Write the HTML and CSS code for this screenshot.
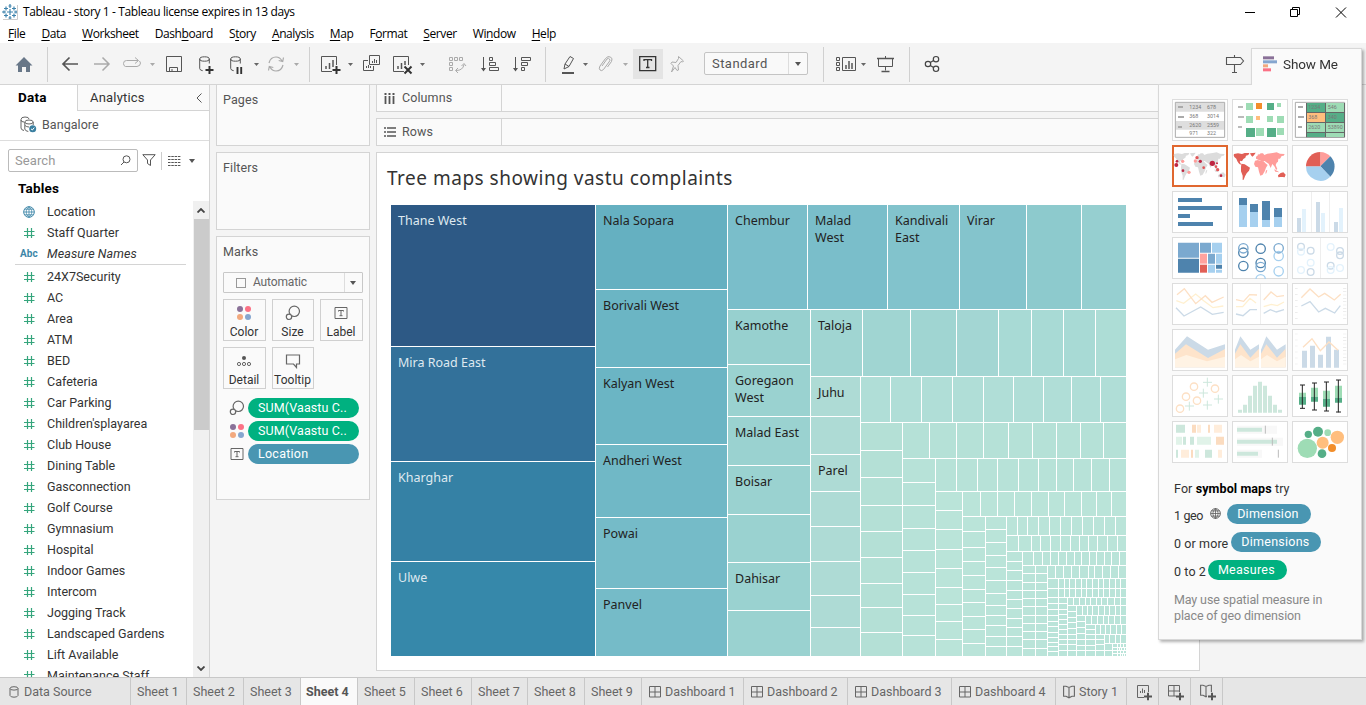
FILE: index.html
```html
<!DOCTYPE html>
<html lang="en">
<head>
<meta charset="utf-8">
<title>Tableau - story 1</title>
<link rel="stylesheet" href="styles.css">
</head>
<body>
<svg class="defs" width="0" height="0">
  <symbol id="hash" viewBox="0 0 12 12"><path d="M4.5 1v10M8.5 1v10M1 4.5h10.500M1 8.500h10.500" fill="none" stroke="#35a57c" stroke-width="1.2"/></symbol>
  <symbol id="globe" viewBox="0 0 12 12"><path d="M6 .7v10.600M.7 6h10.600M1.500 3.200h9M1.500 8.800h9M6 .7C2.300 3.500 2.300 8.500 6 11.300C9.700 8.500 9.700 3.500 6 .7" fill="none" stroke="currentColor" stroke-width=".8"/><circle cx="6" cy="6" r="5.300" fill="none" stroke="currentColor"/></symbol>
  <symbol id="size" viewBox="0 0 16 16"><circle cx="9.300" cy="6.300" r="5.200" fill="none" stroke="#666" stroke-width="1.2"/><circle cx="4" cy="11.800" r="2.700" fill="#fafafa" stroke="#666" stroke-width="1.2"/></symbol>
  <symbol id="dots" viewBox="0 0 16 16"><circle cx="4" cy="4" r="3" fill="#8a7198"/><circle cx="12" cy="4" r="3" fill="#fb7185"/><circle cx="4" cy="12" r="3" fill="#f2a97e"/><circle cx="12" cy="12" r="3" fill="#85a6cf"/></symbol>
  <symbol id="tbox" viewBox="0 0 14 14"><path d="M1 1.500h12v11H1zM4.500 5.500v-1h5v1M7 4.500v5M5.500 9.700h3" fill="none" stroke="#666"/></symbol>
  <symbol id="dash" viewBox="0 0 12 12"><path d="M.5.5h11v10.500H.5zM6 .5v10.500M.5 6h11" fill="none" stroke="#666"/></symbol>
  <symbol id="book" viewBox="0 0 12 14"><path d="M.6 1.300L3 1.200l3 1.200 3-1.200 2.400.1v9.900H9L6 12.800 3 11.200H.6zM6 2.400v10" fill="none" stroke="#666" stroke-width="1.100"/></symbol>
  <symbol id="plus" viewBox="0 0 8 8"><path d="M4 0v8M0 4h8" stroke="#555" stroke-width="2"/></symbol>
  <symbol id="world" viewBox="225 455 162 90">
    <g class="west"><path d="M228 462l12-2 12 2 8-3 14 0-3 6-7 2-2 6-6 4-4 7-4-2-3 3 4 7-2 2-5-4-4-6-3-8-6-5-2-5zM276 460l17-2-5 8-5 4-4-4zM250 491l10 2 7 4 9 6-3 9-7 8-5 9-4 10-3 1 0-13-5-13 0-12z"/></g>
    <g class="east"><path d="M291 482l9-2 6 3 10 0 8 8 5 4-5 8-4 11-6 10-7 3-4-12-3-13-8-2-4-8zM294 476l0-6 7-4 7-6 7 0 4 5 9-4 16-2 12-2 10 4 14 1-3 5-6 1-5 8-5 0-1 9-4 3-3 7 5 12-4 3-4-10-7-8-5 12-6-13-7-4-5-4-9 1-7-3zM348 508l9 4 7 5-12-2zM324 511l4 0-3 9-3 1zM299 464l3-3 0 6-4 3z"/></g>
    <path class="aus" d="M360 526l8-7 8-2 7 7-3 8-7-1-6 0-6 1z"/>
  </symbol>
</svg>

<header class="titlebar">
  <svg width="16" height="16" viewBox="0 0 16 16"><path d="M8 5v6M5 8h6M8 0v4M6.500 2h3M8 12v4M6.500 14h3M0 8h4M2 6.500v3M12 8h4M14 6.500v3M4 2.500v4M2 4.500h4M12 2.500v4M10 4.500h4M4 9.500v4M2 11.500h4M12 9.500v4M10 11.500h4" stroke="#3f84ad" stroke-width="1.200" fill="none"/><path d="M1 15.500h14.500V1" fill="none" stroke="#ccc"/></svg>
  <span class="apptitle">Tableau - story 1 - Tableau license expires in 13 days</span>
  <svg class="winbtns" width="110" height="20" viewBox="1240 0 110 20"><path d="M1245 10.500h10M1290.500 7.500h7v7h-7zM1292.500 7v-1.500h7v7h-1.500M1336 5.500l10 10M1346 5.500l-10 10" fill="none" stroke="#000"/></svg>
</header>
<nav class="menubar">
  <span><u>F</u>ile</span><span><u>D</u>ata</span><span><u>W</u>orksheet</span><span>Dash<u>b</u>oard</span><span>S<u>t</u>ory</span><span><u>A</u>nalysis</span><span><u>M</u>ap</span><span>F<u>o</u>rmat</span><span><u>S</u>erver</span><span>Wi<u>n</u>dow</span><span><u>H</u>elp</span>
</nav>

<div class="toolbar">
  <svg width="47" height="41" viewBox="0 43 47 41"><path d="M15.500 65.500L24 57l8.500 8.500H30V72h-4v-5h-4v5h-4v-6.500z" fill="#687788"/></svg>
  <i class="sep"></i>
  <svg width="261" height="41" viewBox="48 43 261 41" fill="none" stroke="#555">
    <path d="M63 64h15M69.500 57.500L63 64l6.500 6.500" stroke-width="1.700"/>
    <path d="M94 64h15M102.500 57.500L109 64l-6.500 6.500" stroke="#aaa" stroke-width="1.500"/>
    <path d="M129 66.500h-3.500q-2-.5-2-3 0-3 3-3H138M135 57.500l3.500 3-3.500 3M129 66.500h8q3.500-.5 3.500-3.500l-1-2" stroke="#aaa"/>
    <path d="M150 63h5l-2.500 3zM294 63h5l-2.500 3z" fill="#aaa" stroke="none"/><path d="M254 63h5l-2.500 3z" fill="#666" stroke="none"/>
    <path d="M166.500 56.500h15v15h-15zM169.500 71v-3.500h8V71M172 71v-2" />
    <ellipse cx="204.500" cy="59" rx="4.800" ry="2.200"/><path d="M199.700 59v9.500q.3 2 3 2.200M209.300 59v4.500"/>
    <path d="M209.500 66v8M205.500 70h8" stroke="#333" stroke-width="2"/>
    <ellipse cx="235.500" cy="59" rx="4.800" ry="2.200"/><path d="M230.700 59v9.500q.3 2 3 2.200M240.300 59v4.500"/>
    <path d="M237.500 67v7M241.200 67v7" stroke="#333" stroke-width="1.900"/>
    <path d="M269 63q1.500-6 7-6 4 0 6 4M283 65q-1.500 6-7 6-4 0-6-4M283.500 57.500l-.8 4-4-1M268.500 70.500l.8-4 4 1" stroke="#aaa" stroke-width="1.200"/>
  </svg>
  <i class="sep"></i>
  <svg width="235" height="41" viewBox="310 43 235 41" fill="none" stroke="#555">
    <path d="M332 71.500h-10.500v-15h15V65" /><path d="M326 69v-3M329.500 69v-6M333 67v-7" stroke-width="1.500"/><path d="M336.500 66v8M332.500 70h8" stroke="#333" stroke-width="2"/>
    <path d="M348 63h5l-2.500 3zM420 63h5l-2.500 3z" fill="#666" stroke="none"/>
    <path d="M369.500 55.500h10v9h-10zM368 60.500h-4.500v10h10v-4.500M372.500 63v-2M374.500 63v-4M376.500 63v-3M366.500 68v-2M368.500 68v-3M370.500 68v-2"/>
    <path d="M404 71.500h-10.500v-15h15V65"/><path d="M398 69v-3M401.500 69v-6M405 65v-4" stroke-width="1.500"/><path d="M404.500 66.500l7 7M411.500 66.500l-7 7" stroke="#333" stroke-width="2"/>
    <g stroke="#aaa"><path d="M449.500 57.500h3v3h-3zM454.500 57.500h3v3h-3zM459.500 57.500h3v3h-3zM449.500 62.500h3v3h-3zM449.500 67.500h3v3h-3zM456 70.500q7 0 8-6M461.500 66l2.500-2.500 2 2.500M458 68l-2.500 2.500 2.500 2.500"/></g>
    <path d="M483.500 57v13M489.500 57.500h3v3h-3zM489.500 62.500h6v3h-6zM489.500 67.500h9v3h-9z"/><path d="M481 68h5l-2.500 3.500zM513 68h5l-2.500 3.500z" fill="#555" stroke="none"/>
    <path d="M515.500 57v13M521.500 57.500h9v3h-9zM521.500 62.500h6v3h-6zM521.500 67.500h3v3h-3z"/>
  </svg>
  <i class="sep"></i>
  <svg width="87" height="41" viewBox="546 43 87 41" fill="none" stroke="#555">
    <path d="M564 69l1-5 5-7.500 3.500 2-4.500 8zM565 64l4 2.500"/><path d="M562 73h12" stroke-width="2"/>
    <path d="M583 63h5l-2.500 3z" fill="#666" stroke="none"/><path d="M623 63h5l-2.500 3z" fill="#aaa" stroke="none"/>
    <path d="M602 66l5-7q1.500-1.500 2.500 0t-.5 3l-5.500 7.500q-2 2-3.500.5t0-4l5.500-7.500q2.500-3 5-1.500t1 4.500l-4 5.500" stroke="#aaa"/>
  </svg>
  <div class="tb-on"><svg width="18" height="16" viewBox="0 0 18 16"><path d="M.7.7h16v14H.7zM5 5V3.700h7.500V5M8.700 3.700v8M7 11.500h3.500" fill="none" stroke="#333" stroke-width="1.300"/></svg></div>
  <svg width="41" height="41" viewBox="663 43 41 41"><path d="M678.500 56.500l5 4.500-1 1-1.500-.5-3 4 .5 4.500-1.500.5-2-3-3.500 4.500 2-6-2.500-2.500 1-1.500 4 .5 2.500-4z" fill="none" stroke="#aaa"/></svg>
  <div class="select"><span>Standard</span><i></i></div>
  <i class="sep sep2"></i>
  <svg width="85" height="41" viewBox="824 43 85 41" fill="none" stroke="#555">
    <path d="M836.500 57.500h3v3h-3zM836.500 62.500h3v3h-3zM836.500 67.500h3v3h-3zM842.500 57.500h13v13h-13z"/><path d="M846 69v-4M849 69v-8M852 69v-6" stroke-width="1.500"/><path d="M861 63h5l-2.500 3z" fill="#666" stroke="none"/>
    <path d="M878.500 58.500h14v8h-14zM885.500 66.500v4M885.500 56v2"/><path d="M877 58.500h17M881.500 71.500h8" stroke-width="1.500"/>
  </svg>
  <i class="sep"></i>
  <svg width="40" height="41" viewBox="910 43 40 41" fill="none" stroke="#444" stroke-width="1.200"><circle cx="928" cy="64" r="2.700"/><circle cx="936" cy="59.200" r="2.700"/><circle cx="936" cy="68.800" r="2.700"/><path d="M930.300 62.600l3.300-2M930.300 65.400l3.300 2"/></svg>
  <svg class="guide" width="20" height="20" viewBox="1225 54 20 20" fill="none" stroke="#555"><path d="M1226.500 57.500h14l3 3.500-3 3.500h-14zM1234.500 55v2.500M1234.500 64.500v7.500M1232 72.500h5" stroke-width="1.100"/></svg>
</div>

<main class="work">
  <aside class="data">
    <div class="dtabs"><b>Data</b><div><span>Analytics</span><svg width="6" height="10" viewBox="0 0 6 10"><path d="M5.500.5L1 5l4.500 4.500" fill="none" stroke="#555"/></svg></div></div>
    <div class="source"><svg width="18" height="18" viewBox="0 0 18 18" fill="none" stroke="#666"><path d="M1 12V3.500Q1 1 5 1t4 2M1 4q0 2 3 2M1 12q0 2 3 2.500"/><ellipse cx="9" cy="6" rx="4.200" ry="2"/><path d="M4.800 6v7q.3 2 3.500 2.500M13.200 6v3M5 9.500q1.500 1.500 4 1.500"/><circle cx="12.700" cy="12.700" r="3.500" fill="#3a7fa0" stroke="none"/><path d="M11 12.800l1.300 1.200 2-2.400" stroke="#fff"/></svg><span>Bangalore</span></div>
    <div class="find"><div class="search"><span>Search</span><svg width="11" height="11" viewBox="0 0 11 11"><path d="M1 10l3-3" stroke="#555"/><circle cx="6.500" cy="4.300" r="3.500" fill="none" stroke="#555"/></svg></div>
      <svg width="14" height="13" viewBox="0 0 14 13"><path d="M.8.700h12.400L8.500 6v5.500l-3-2V6z" fill="none" stroke="#555"/></svg><i class="bar"></i>
      <svg width="13" height="10" viewBox="0 0 13 10"><path d="M0 .5h13M0 3.500h13M0 6.500h13M0 9.500h13" stroke="#555" stroke-dasharray="2.500 .8"/></svg><i class="caret"></i></div>
    <h2>Tables</h2>
    <div class="fieldwrap"><ul class="fields" id="fields"></ul>
      <div class="scroll"><svg width="8" height="5" viewBox="0 0 8 5"><path d="M.5 4.500L4 1l3.500 3.500" fill="none" stroke="#444" stroke-width="1.800"/></svg><div class="thumb"></div><svg width="8" height="5" viewBox="0 0 8 5"><path d="M.5.500L4 4 7.500.500" fill="none" stroke="#444" stroke-width="1.800"/></svg></div></div>
  </aside>

  <section class="cards">
    <div class="card pages">Pages</div>
    <div class="card filters">Filters</div>
    <div class="card marks"><span>Marks</span>
      <div class="mselect"><i class="sq"></i><span>Automatic</span><b></b></div>
      <div class="mgrid">
        <div><svg width="16" height="16"><use href="#dots"/></svg>Color</div>
        <div><svg width="16" height="16"><use href="#size"/></svg>Size</div>
        <div><svg width="14" height="16"><use href="#tbox"/></svg>Label</div>
        <div><svg width="16" height="16" viewBox="0 0 16 16"><circle cx="8" cy="5" r="2" fill="#555"/><g fill="none" stroke="#666"><circle cx="3" cy="11" r="1.600"/><circle cx="8" cy="11" r="1.600"/><circle cx="13" cy="11" r="1.600"/></g></svg>Detail</div>
        <div><svg width="16" height="16" viewBox="0 0 16 16"><path d="M1.500 2h13v9h-3v3.500L8.500 11h-7z" fill="none" stroke="#666" stroke-width="1.200"/></svg>Tooltip</div>
      </div>
      <div class="mpill"><svg width="16" height="16"><use href="#size"/></svg><span class="pill green">SUM(Vaastu C..</span></div>
      <div class="mpill"><svg width="16" height="16"><use href="#dots"/></svg><span class="pill green">SUM(Vaastu C..</span></div>
      <div class="mpill"><svg width="16" height="14"><use href="#tbox"/></svg><span class="pill blue loc">Location</span></div>
    </div>
  </section>

  <section class="view">
    <div class="shelf"><div><svg width="11" height="11" viewBox="0 0 11 11"><path d="M1.500 3v8M5.500 3v8M9.500 3v8M.5 1h2M4.500 1h2M8.500 1h2" stroke="#555" stroke-width="1.800"/></svg>Columns</div></div>
    <div class="shelf"><div><svg width="12" height="10" viewBox="0 0 12 10"><path d="M3 1h9M3 5h9M3 9h9M0 1h2M0 5h2M0 9h2" stroke="#555" stroke-width="1.600"/></svg>Rows</div></div>
    <div class="sheet"><h1>Tree maps showing vastu complaints</h1><svg id="tree" width="735" height="451" viewBox="391 205 735 451" shape-rendering="crispEdges"></svg></div>
  </section>
</main>

<footer class="tabs">
  <div class="t-src"><svg width="10" height="12" viewBox="0 0 10 12"><path d="M1 2.500v7q.5 1.700 4 1.700t4-1.700v-7" fill="none" stroke="#666"/><ellipse cx="5" cy="2.400" rx="4" ry="1.700" fill="none" stroke="#666"/></svg>Data Source</div>
  <div class="t-s first">Sheet 1</div><div class="t-s">Sheet 2</div><div class="t-s">Sheet 3</div><div class="t-s on">Sheet 4</div><div class="t-s">Sheet 5</div><div class="t-s">Sheet 6</div><div class="t-s six">Sheet 7</div><div class="t-s">Sheet 8</div><div class="t-s">Sheet 9</div>
  <div class="t-d one"><svg width="12" height="12"><use href="#dash"/></svg>Dashboard 1</div><div class="t-d"><svg width="12" height="12"><use href="#dash"/></svg>Dashboard 2</div><div class="t-d"><svg width="12" height="12"><use href="#dash"/></svg>Dashboard 3</div><div class="t-d"><svg width="12" height="12"><use href="#dash"/></svg>Dashboard 4</div>
  <div class="t-st"><svg width="12" height="14"><use href="#book"/></svg>Story 1</div>
  <div class="t-n"><svg width="16" height="17"><path d="M8 13.500H1.500v-12h11V8M4.500 9V7M6.500 9V4.500M8.500 9V6" fill="none" stroke="#666"/><use href="#plus" x="8" y="8.500" width="8" height="8"/></svg></div>
  <div class="t-n"><svg width="16" height="17"><use href="#dash" y="1" width="12" height="12"/><path d="M8 8h8v8H8z" fill="#e6e6e6"/><use href="#plus" x="8" y="8.500" width="8" height="8"/></svg></div>
  <div class="t-n"><svg width="16" height="17"><use href="#book" width="12" height="14"/><path d="M7 8h9v8H7z" fill="#e6e6e6"/><use href="#plus" x="8" y="8.500" width="8" height="8"/></svg></div>
</footer>

<aside class="showme">
  <div class="sm-tab"><svg width="14" height="16" viewBox="315 168 42 46"><path d="M315 168h33v9h-33z" fill="#8a7198"/><path d="M315 180h42v9h-42z" fill="#85a6cf"/><path d="M315 192h15v9h-15z" fill="#f2a97e"/><path d="M315 204h24v9h-24z" fill="#fb7185"/></svg>Show Me</div>
  <div class="sm-body">
    <div class="thumbs">
      <svg viewBox="42 297 168 126"><path d="M52 307h148v105H52z" fill="#fff" stroke="#aaa" stroke-width="3"/><path d="M54 309h144v26H54zM54 363h144v26H54z" fill="#dedede"/><path d="M60 318h15v6H60zM60 348h18v6H60zM60 378h12v6H60z" fill="#aaa"/><g class="tiny"><text x="94" y="327">1234</text><text x="147" y="327">678</text><text x="94" y="354">368</text><text x="147" y="354">3014</text><text x="94" y="381">2620</text><text x="147" y="381">2559</text><text x="94" y="405">971</text><text x="147" y="405">322</text></g></svg>
      <svg viewBox="222 297 168 126"><path d="M240 318h15v6h-15zM240 348h18v6h-18zM240 378h12v6h-12z" fill="#bbb"/><path d="M264 309h21v21h-21zM357 309h12v12h-12zM264 348h21v21h-21zM327 348h18v18h-18zM357 348h21v21h-21zM294 384h24v24h-24zM357 384h21v21h-21z" fill="#9edcb5"/><path d="M327 309h21v21h-21zM264 384h27v27h-27zM327 384h27v27h-27z" fill="#55ae87"/><path d="M294 309h18v18h-18z" fill="#f28e2b"/><path d="M294 348h12v12h-12z" fill="#ffbe7d"/></svg>
      <svg viewBox="402 297 168 126"><path d="M412 307h148v105H412z" fill="#fff" stroke="#aaa" stroke-width="3"/><path d="M420 318h15v6h-15zM420 348h18v6h-18zM420 378h12v6h-12z" fill="#aaa"/><path d="M444 309h117v103H444z" fill="#666"/><path d="M447 309h54v27h-54zM504 339h54v27h-54zM447 399h54v12h-54z" fill="#55ae87"/><path d="M504 309h54v27h-54zM447 369h54v27h-54zM504 369h54v27h-54zM504 399h54v12h-54z" fill="#9edcb5"/><path d="M447 339h54v27h-54z" fill="#ffbe7d"/><g class="tiny"><text x="451" y="327">1234</text><text x="509" y="327">546</text><text x="451" y="357">368</text><text x="509" y="357">340</text><text x="451" y="387">2620</text><text x="509" y="387">53890</text></g></svg>

      <svg class="sel" viewBox="42 435 168 126"><use class="wgray" href="#world" x="45" y="455" width="162" height="90"/><g fill="#bf2642"><circle cx="55" cy="495" r="6"/><circle cx="57" cy="484" r="4"/><circle cx="127" cy="484" r="5"/><circle cx="163" cy="490" r="8"/><circle cx="75" cy="512" r="4"/><circle cx="189" cy="527" r="4"/><circle cx="177" cy="490" r="3"/></g><g fill="#e15759"><circle cx="117" cy="473" r="5"/><circle cx="74" cy="484" r="5" fill="#ff9d9a"/><circle cx="93" cy="517" r="5" fill="#ff9d9a"/><circle cx="112" cy="483" r="5" fill="#ff9d9a"/><circle cx="137" cy="503" r="4"/><circle cx="179" cy="509" r="5"/><circle cx="174" cy="500" r="4"/></g></svg>
      <svg viewBox="222 435 168 126"><use class="wred" href="#world" x="225" y="455" width="162" height="90"/></svg>
      <svg viewBox="402 435 168 126"><path d="M487 499V456a43 43 0 0 1 30 13z" fill="#ff9d9a"/><path d="M487 499l30-30a43 43 0 0 1 0 61z" fill="#4e83ad"/><path d="M487 499l30 31a43 43 0 0 1-73-31z" fill="#a6d0ef"/><path d="M487 499h-43a43 43 0 0 1 43-43z" fill="#e15f56"/></svg>

      <svg viewBox="42 573 168 126"><path d="M60 594h72v12H60zM60 618h132v12H60zM60 642h36v12H60zM60 666h105v12H60z" fill="#4e83ad"/></svg>
      <svg viewBox="222 573 168 126"><path d="M243 594h24v87h-24zM276 612h24v69h-24zM312 603h24v78h-24zM348 624h24v57h-24z" fill="#4e83ad"/><path d="M243 615h24v66h-24zM276 636h24v45h-24zM312 660h24v21h-24zM348 651h24v30h-24z" fill="#a6d0ef"/></svg>
      <svg viewBox="402 573 168 126"><path d="M459 576h3v120h-3zM513 576h3v120h-3z" fill="#eee"/><path d="M417 654h12v42h-12zM474 606h12v90h-12zM528 666h12v30h-12z" fill="#cbdae7"/><path d="M432 627h12v69h-12zM489 639h12v57h-12zM543 624h12v72h-12z" fill="#e3f2fc"/></svg>

      <svg viewBox="42 22 168 126"><path d="M60 39h63v45H60zM126 39h33v30h-33zM150 72h21v30h-21z" fill="#7ba9cf"/><path d="M60 87h63v42H60zM174 105h18v12h-18z" fill="#4e83ad"/><path d="M162 39h30v30h-30zM174 72h18v30h-18zM150 105h21v24h-21zM174 120h18v9h-18z" fill="#a6d0ef"/><path d="M126 72h21v30h-21z" fill="#ffa39f"/><path d="M126 105h21v24h-21z" fill="#e15f56"/></svg>
      <svg viewBox="222 22 168 126"><g fill="none" stroke="#4e83ad" stroke-width="4"><circle cx="256" cy="69" r="14"/><circle cx="256" cy="109" r="14"/><circle cx="308" cy="57" r="14"/><circle cx="308" cy="100" r="14"/><circle cx="256" cy="56" r="14" stroke="#7ba9cf"/><circle cx="362" cy="56" r="14" stroke="#7ba9cf"/><circle cx="308" cy="112" r="14" stroke="#7ba9cf"/><g stroke="#a6d0ef"><circle cx="362" cy="79" r="14"/><circle cx="362" cy="125" r="14"/><circle cx="308" cy="149" r="14"/></g></g></svg>
      <svg viewBox="402 22 168 126"><path d="M486 25h3v120h-3z" fill="#eee"/><g fill="none" stroke="#cbdae7" stroke-width="4"><circle cx="429" cy="51" r="10"/><circle cx="458" cy="63" r="10"/><circle cx="458" cy="127" r="10"/><circle cx="546" cy="64" r="10"/><circle cx="546" cy="77" r="10"/><circle cx="518" cy="108" r="10"/><g stroke="#e3f2fc"><circle cx="429" cy="66" r="10"/><circle cx="458" cy="99" r="10"/><circle cx="429" cy="121" r="10"/><circle cx="518" cy="52" r="10"/><circle cx="518" cy="121" r="10"/><circle cx="546" cy="115" r="10"/></g></g></svg>

      <svg viewBox="42 160 168 126" fill="none" stroke-width="4"><path d="M55 213l22 8 36-28 24 20 28 21 31-5" stroke="#fff0d0"/><path d="M57 195l22-18 34 45 29-24 20 20 35-16" stroke="#fde0c4"/><path d="M54 234l24 25 50-27 35 22 34-6" stroke="#cbdae7"/></svg>
      <svg viewBox="222 160 168 126" fill="none" stroke-width="4"><path d="M306 163h3v120h-3z" fill="#eee" stroke="none"/><path d="M234 231h20l22-25 18 14M317 231l23-7 18 4 20-11" stroke="#fff0d0"/><path d="M234 210l23 5 18-20 22 1M317 211l22-24 18 14 21-3" stroke="#fde0c4"/><path d="M234 253l21 5 21-18h21M317 251l20-11 18 7 23-7" stroke="#cbdae7"/></svg>
      <svg viewBox="402 160 168 126" fill="none" stroke-width="4"><path d="M415 175v100" stroke="#e8e8e8" stroke-width="8" stroke-dasharray="2 16"/><path d="M560 175v100" stroke="#e8e8e8" stroke-width="10" stroke-dasharray="2 8"/><path d="M430 204l26-26 26 24 18-11 29 20 19-17" stroke="#fde0c4"/><path d="M430 229l26-13 26 31 20-11 28 14 17-22" stroke="#cbdae7"/></svg>

      <svg viewBox="42 298 168 126"><path d="M51 360l36-40 63 40 51-16v69H51z" fill="#cbdae7"/><path d="M51 372l33-28 66 41 51-27v55H51z" fill="#fee4cb"/><path d="M51 389l34-13 62 19 54-14v32H51z" fill="#fff3e4"/></svg>
      <svg viewBox="222 298 168 126"><path d="M231 360l16-40 30 40 26-16v69h-72zM309 360l16-40 32 40 26-16v69h-74z" fill="#cbdae7"/><path d="M231 372l16-28 30 40 26-27v56h-72zM309 372l16-28 32 40 26-27v56h-74z" fill="#fee4cb"/><path d="M231 389l18-13 28 19 26-14v32h-72zM309 389l18-13 30 19 26-14v32h-74z" fill="#fff3e4"/></svg>
      <svg viewBox="402 298 168 126"><path d="M415 312v100" stroke="#e8e8e8" stroke-width="8" stroke-dasharray="2 16"/><path d="M560 312v100" stroke="#e8e8e8" stroke-width="10" stroke-dasharray="2 8"/><path d="M432 363h15v51h-15zM456 348h15v66h-15zM480 375h15v39h-15zM504 321h15v93h-15zM528 360h15v54h-15z" fill="#cbdae7"/><path d="M435 353l27-26 25 36 26-26 27 25" fill="none" stroke="#fde0c4" stroke-width="4"/></svg>

      <svg viewBox="42 436 168 126" fill="none"><g stroke="#fde0c4" stroke-width="4"><circle cx="108" cy="471" r="11"/><circle cx="171" cy="477" r="11"/><circle cx="84" cy="501" r="11"/><circle cx="117" cy="513" r="11"/><circle cx="66" cy="537" r="11"/></g><path d="M148 444v27M135 458h27M136 477v27M123 490h27M181 495v27M168 508h27M94 516v27M81 529h27M148 513v27M135 526h27" stroke="#cde7dc" stroke-width="3"/></svg>
      <svg viewBox="222 436 168 126"><path d="M240 540h12v9h-12zM255 525h12v24h-12zM270 498h12v51h-12zM285 468h12v81h-12zM300 456h12v93h-12zM315 468h12v81h-12zM330 498h12v51h-12zM345 525h12v24h-12zM360 540h12v9h-12z" fill="#cde7dc"/></svg>
      <svg viewBox="402 436 168 126"><path d="M423 489h21v12h-21zM459 474h21v27h-21zM495 483h21v24h-21zM531 468h21v36h-21z" fill="#9edcb5"/><path d="M423 501h21v24h-21zM459 501h21v15h-21zM495 507h21v24h-21zM531 504h21v15h-21z" fill="#55ae87"/><path d="M433 466v70M426 466h15M426 536h15M469 460v81M462 460h15M462 541h15M505 457v87M498 457h15M498 544h15M541 451v97M534 451h15M534 547h15" stroke="#222" stroke-width="3"/></svg>

      <svg viewBox="42 574 168 126"><path d="M54 585h27v24H54zM96 621h12v24H96zM75 621h9v24h-9zM54 660h6v24h-6zM141 660h21v24h-21z" fill="#cde7dc"/><path d="M54 621h18v24H54zM117 621h42v24h-42zM111 660h12v24h-12z" fill="#e1f3e9"/><path d="M102 585h12v24h-12zM150 585h6v24h-6zM174 621h24v24h-24zM99 660h6v24h-6z" fill="#fbdcc0"/><path d="M117 585h12v24h-12zM168 585h24v24h-24zM69 660h24v24H69zM180 660h12v24h-12z" fill="#ffeddb"/></svg>
      <svg viewBox="222 574 168 126"><path d="M237 588h120v24H237zM237 624h138v24H237zM237 660h75v24h-75z" fill="#f8f8f8"/><path d="M237 594h75v12h-75zM237 630h120v12H237zM237 666h63v12h-63z" fill="#cde7dc"/><path d="M322 588v24M343 624v24M361 660v24" stroke="#bbb" stroke-width="3"/></svg>
      <svg viewBox="402 574 168 126"><g fill="#55ae87"><circle cx="451" cy="614" r="11"/><circle cx="480" cy="606" r="15"/><circle cx="492" cy="672" r="13"/></g><g fill="#9edcb5"><circle cx="509" cy="609" r="10"/><circle cx="448" cy="656" r="29"/></g><g fill="#ffbe7d"><circle cx="494" cy="639" r="18"/><circle cx="538" cy="623" r="20"/></g><circle cx="522" cy="655" r="12" fill="#f28e2b"/></svg>
    </div>
    <p class="r0">For <b>symbol maps</b> try</p>
    <p class="r1"><span>1 geo</span><svg width="11" height="11"><use href="#globe"/></svg><span class="pill blue">Dimension</span></p>
    <p class="r2"><span>0 or more</span><span class="pill blue">Dimensions</span></p>
    <p class="r3"><span>0 to 2</span><span class="pill green">Measures</span></p>
    <p class="note">May use spatial measure in<br>place of geo dimension</p>
  </div>
</aside>
<script src="app.js"></script>
</body>
</html>
```

FILE: styles.css
```css
* { box-sizing: border-box; }
body { margin: 0; width: 1366px; height: 705px; overflow: hidden; position: relative; display: flex; flex-direction: column; background: #f4f4f4; font: 13px/16px Roboto, "Noto Sans", sans-serif; color: #333; }
svg { display: block; flex: none; }
.defs { position: absolute; }
h1, h2, p, ul { margin: 0; padding: 0; font-weight: 400; list-style: none; }

.titlebar { height: 22px; flex: none; background: #fff; display: flex; align-items: center; padding: 1px 16px 0 2px; color: #000; font: 12px/16px "Open Sans", "Noto Sans", sans-serif; }
.apptitle { margin-left: 5px; letter-spacing: -.37px; }
.winbtns { margin-left: auto; }
.menubar { height: 21px; flex: none; background: #fff; display: flex; padding: 4px 0 0 8px; gap: 16px; color: #000; font: 12px/16px "Open Sans", "Noto Sans", sans-serif; letter-spacing: -.41px; }
.menubar u { text-underline-offset: 2px; }

.toolbar { height: 42px; flex: none; display: flex; border-bottom: 1px solid #d4d4d4; background: #f4f4f4; }
.sep { width: 1px; height: 35px; margin-top: 4px; background: #d0d0d0; }
.sep2 { margin-left: 15px; }
.tb-on { width: 30px; height: 30px; margin-top: 6px; background: #e4e4e4; display: flex; align-items: center; justify-content: center; }
.select { width: 104px; height: 23px; margin-top: 9px; background: #f9f9f9; border: 1px solid #c4c4c4; border-radius: 2px; display: flex; color: #555; }
.select span { flex: 1; padding-left: 7px; font-size: 13px; line-height: 21px; letter-spacing: .45px; }
.select i { width: 19px; border-left: 1px solid #ddd; }
.select i::after, .mselect b::after, .caret { content: ""; display: block; width: 0; height: 0; border: 3.5px solid transparent; border-top: 4px solid #555; border-bottom: 0; }
.select i::after { margin: 9px 0 0 6px; }
.guide { margin: 11px 0 0 275px; }

.work { flex: 1; min-height: 0; display: flex; }
.data { width: 210px; background: #fff; border-right: 1px solid #d4d4d4; display: flex; flex-direction: column; }
.dtabs { height: 26px; flex: none; display: flex; font-size: 14px; line-height: 24px; }
.dtabs b { width: 77px; padding-left: 18px; color: #000; font-weight: 700; font-size: 13.500px; letter-spacing: .2px; }
.dtabs div { flex: 1; border-left: 1px solid #d4d4d4; border-bottom: 1px solid #d4d4d4; background: #fafafa; display: flex; align-items: center; justify-content: space-between; padding: 0 7px 0 12px; font-size: 13px; letter-spacing: .2px; color: #333; }
.source { height: 30px; flex: none; border-bottom: 1px solid #ddd; display: flex; align-items: center; padding: 0 0 1px 20px; gap: 4px; color: #555; font-size: 12.500px; letter-spacing: .05px; }
.find { display: flex; align-items: center; height: 23px; margin-top: 8px; padding-left: 8px; flex: none; }
.search { width: 130px; height: 23px; border: 1px solid #bbb; border-radius: 2px; display: flex; align-items: center; justify-content: space-between; padding: 0 6px 0 6px; margin-right: 4px; color: #999; letter-spacing: .1px; }
.bar { width: 1px; height: 18px; background: #ccc; margin: 0 6px 0 5px; }
.caret { margin-left: 8px; }
.data h2 { font-size: 13.500px; font-weight: 700; color: #000; padding: 7px 0 0 18px; height: 29px; line-height: 18px; flex: none; letter-spacing: .2px; }
.fieldwrap { flex: 1; min-height: 0; display: flex; overflow: hidden; }
.fields { flex: 1; font-size: 12.500px; }
.fields li { height: 21px; line-height: 21px; padding-left: 20px; display: flex; align-items: center; white-space: nowrap; color: #333; }
.fields .ico { width: 27px; color: #3d86a8; font-size: 10px; font-weight: 700; font-style: normal; }
.fields .ico svg { margin-left: 3px; }
.fields .it { font-style: italic; height: 21px; letter-spacing: .1px; }
.fields .rule { height: 1px; background: #d4d4d4; margin: 0 7px 1px 15px; padding: 0; }
.scroll { width: 16px; background: #f0f0f0; display: flex; flex-direction: column; align-items: center; padding: 7px 0 6px; }
.thumb { width: 15px; height: 211px; background: #cbcbcb; margin: 6px 0 auto; }

.cards { width: 154px; margin-left: 6px; display: flex; flex-direction: column; }
.card { background: #fafafa; border: 1px solid #d4d4d4; padding: 7px 6px; color: #555; letter-spacing: .1px; font-size: 12.500px; }
.pages { height: 61px; border-top: 0; }
.filters { height: 78px; margin-top: 6px; }
.marks { height: 264px; margin-top: 6px; }
.mselect { margin-top: 12px; height: 21px; width: 140px; border: 1px solid #c8c8c8; border-radius: 1px; display: flex; align-items: center; color: #666; line-height: 19px; font-size: 12px; letter-spacing: -.15px; }
.mselect .sq { width: 10px; height: 10px; border: 1px solid #999; margin: 0 7px 0 12px; }
.mselect b { margin-left: auto; width: 18px; height: 19px; border-left: 1px solid #ddd; }
.mselect b::after { margin: 8px 0 0 5px; }
.mgrid { display: grid; grid-template-columns: 43px 42px 43px; gap: 6px; margin-top: 6px; width: 140px; }
.mgrid div { height: 42px; border: 1px solid #d0d0d0; display: flex; flex-direction: column; align-items: center; padding: 5px 1px 0 0; gap: 3px; font-size: 12px; letter-spacing: 0; color: #333; }
.mpill { display: flex; align-items: center; gap: 3px; margin: 3px 0 0 6px; }
.mpill svg { width: 16px; }
.mgrid + .mpill { margin-top: 9px; }
.pill { display: block; height: 20px; line-height: 19px; border-radius: 10px; padding-left: 10px; color: #fff; letter-spacing: .25px; }
.mpill .pill { width: 111px; letter-spacing: .1px; }
.mpill .loc { letter-spacing: .25px; }
.green { background: #00b180; }
.blue { background: #4996b2; }

.view { margin-left: 6px; flex: 1; display: flex; flex-direction: column; }
.shelf { width: 800px; height: 28px; flex: none; border: 1px solid #d4d4d4; background: #fafafa; margin-bottom: 6px; color: #555; }
.shelf:first-child { height: 27px; border-top: 0; }
.shelf:nth-child(2) div { gap: 6px; }
.shelf div { width: 125px; height: 26px; border-right: 1px solid #d4d4d4; display: flex; align-items: center; gap: 7px; padding-left: 7px; font-size: 12.500px; letter-spacing: .1px; }
.sheet { width: 824px; height: 519px; background: #fff; border: 1px solid #d4d4d4; padding: 13px 0 0 14px; }
.sheet h1 { font: 19px/24px "Noto Sans", sans-serif; color: #333; letter-spacing: .5px; height: 39px; margin-left: -4px; }
#tree text { font: 12.500px "Noto Sans", sans-serif; fill: #222; }
#tree text.lt { fill: #dfe9f0; }

.tabs { height: 28px; flex: none; display: flex; background: #e6e6e6; border-top: 1px solid #c8c8c8; color: #666; font-size: 12.500px; line-height: 28px; white-space: nowrap; }
.tabs div { border-right: 1px solid #c8c8c8; display: flex; align-items: center; flex: none; letter-spacing: 0; padding-top: 1px; }
.tabs .t-src { width: 131px; padding-left: 9px; gap: 5px; padding-right: 0; }
.tabs .t-s { width: 57px; padding-left: 6px; }
.tabs .first, .tabs .six { width: 56px; }
.tabs .on { background: #fafafa; font-weight: 700; color: #555; padding: 0 0 0 5px; }
.tabs .t-d { width: 104px; padding-left: 7px; gap: 4px; }
.tabs .one { width: 102px; }
.tabs .t-st { width: 71px; padding-left: 7px; gap: 4px; }
.tabs .t-n { width: 32px; padding-left: 9px; }

.showme { position: absolute; left: 1158px; top: 48px; width: 204px; height: 592px; filter: drop-shadow(2px 2px 1.500px rgba(0,0,0,.3)); }
.sm-tab { position: relative; z-index: 1; margin-left: 93px; width: 111px; height: 37px; background: #fafafa; border: 1px solid #d8d8d8; border-bottom: 0; display: flex; align-items: center; padding: 0 0 7px 11px; gap: 6px; font-size: 13.500px; letter-spacing: -.1px; color: #333; }
.sm-body { margin-top: -1px; height: 556px; background: #fafafa; border: 1px solid #d8d8d8; padding: 14px 0 0 13px; font-size: 12.500px; }
.thumbs { display: grid; grid-template-columns: repeat(3, 56px); gap: 4px; }
.thumbs svg { width: 56px; height: 42px; background: #fff; box-shadow: inset 0 0 0 1px #ddd; }
.thumbs .sel { box-shadow: inset 0 0 0 2px #e0672f; }
.tiny { font: 16px Roboto, sans-serif; fill: #777; }
.wgray { fill: #dcdcdc; }
.wred { fill: #e15f56; --east: #ff9d9a; }
.east { fill: var(--east, #dcdcdc); }
.showme p { display: flex; height: 28px; padding-left: 2px; letter-spacing: .1px; color: #333; white-space: pre; }
.showme p b { color: #000; font-weight: 700; }
.showme .r0 { height: 23px; margin-top: 18px; }
.showme p > span:first-child { padding-top: 4px; }
.showme .r1 > span:first-child { letter-spacing: -.35px; }
.r1 svg { margin: 4px 6px 0 7px; color: #555; }
.showme .r1 .pill { width: 84px; }
.r2 .pill { width: 90px; margin-left: 3px; }
.r3 .pill { width: 79px; margin-left: 2px; }
.showme .note { color: #888; padding-top: 4px; display: block; letter-spacing: -.13px; }
```

FILE: app.js
```javascript
const NS = 'http://www.w3.org/2000/svg';

// Field list of the data pane
const names = ['24X7Security', 'AC', 'Area', 'ATM', 'BED', 'Cafeteria', 'Car Parking', "Children'splayarea", 'Club House', 'Dining Table', 'Gasconnection', 'Golf Course', 'Gymnasium', 'Hospital', 'Indoor Games', 'Intercom', 'Jogging Track', 'Landscaped Gardens', 'Lift Available', 'Maintenance Staff'];
const icon = id => `<span class="ico"><svg width="12" height="12"><use href="#${id}"/></svg></span>`;
document.getElementById('fields').innerHTML =
  `<li>${icon('globe')}Location</li><li>${icon('hash')}Staff Quarter</li>` +
  `<li class="it"><span class="ico">Abc</span>Measure Names</li><li class="rule"></li>` +
  names.map(n => `<li>${icon('hash')}${n}</li>`).join('');

// Treemap strips: direction, cross start/end, main start/end, dividers, colours
const R = 1126, B = 656;
const strips = [
  ['v', 391, 595, 205, B, [346, 461, 561], ['#2d5985', '#33719a', '#3581a5', '#3688aa']],
  ['v', 596, 727, 205, B, [289, 367, 444, 517, 588], ['#65b0c1', '#6bb5c4', '#6bb5c4', '#70b8c6', '#75bbc8', '#75bbc8']],
  ['h', 205, 309, 728, R, [807, 887, 959, 1026, 1081], ['#7abeca', '#7abeca', '#82c3cc', '#84c4cc', '#8dcacd', '#96cfd0']],
  ['v', 728, 810, 310, B, [364, 416, 465, 514, 562, 610], ['#97d0cf', '#9ad2d0']],
  ['h', 310, 376, 811, R, [862, 910, 956, 998, 1031, 1063, 1095], ['#a0d5d2', '#a0d5d2', '#a0d5d2', '#a3d6d3', '#a8dad5', '#a8dad5', '#a8dad5', '#adddd6']],
  ['v', 811, 860, 377, B, [416, 454, 491, 526, 561, 595, 627], ['#aedbd5']],
  ['h', 377, 422, 861, R, [890, 921, 952, 983, 1013, 1043, 1071, 1100], ['#b0ded7']],
  ['v', 861, 902, 423, B, [450, 477, 505, 531, 557, 583, 607, 632], ['#b4e0d6']],
  ['h', 423, 458, 903, R, [929, 956, 983, 1008, 1032, 1056, 1080, 1103], ['#b5e1d7']],
  ['v', 903, 935, 459, B, [482, 505, 528, 550, 572, 594, 615, 635], ['#b7e2d8']],
  ['h', 459, 491, 936, R, [956, 977, 997, 1018, 1038, 1056, 1073, 1091, 1109], ['#b7e2d8']],
  ['v', 936, 962, 492, B, [510, 529, 549, 568, 587, 604, 621, 639]],
  ['h', 492, 516, 963, R, [980, 997, 1014, 1031, 1048, 1064, 1081, 1096, 1111]],
  ['v', 963, 985, 517, B, [531, 547, 561, 575, 589, 602, 616, 629, 643]],
  ['v', 986, 1006, 517, B, [529, 542, 555, 567, 580, 593, 605, 615, 625, 636, 646]],
  ['h', 517, 535, 1007, R, [1017, 1027, 1038, 1049, 1060, 1071, 1082, 1093, 1104, 1115]],
  ['h', 536, 551, 1007, R, [1018, 1031, 1040, 1050, 1060, 1070, 1079, 1088, 1097, 1107, 1117]],
  ['v', 1007, 1022, 552, B, [561, 570, 580, 590, 599, 608, 618, 627, 636, 646]],
  ['h', 552, 565, 1023, R, [1033, 1042, 1050, 1058, 1066, 1074, 1081, 1089, 1096, 1104, 1111, 1119]],
  ['v', 1023, 1035, 566, B, [573, 582, 590, 598, 606, 615, 623, 631, 639, 648]],
  ['v', 1036, 1047, 566, B, [573, 582, 590, 598, 606, 615, 623, 631, 639, 648]],
  ['h', 566, 578, 1048, R, [1055, 1063, 1071, 1079, 1088, 1094, 1102, 1110, 1118]],
  ['h', 579, 588, 1048, R, [1058, 1064, 1069, 1075, 1081, 1086, 1092, 1098, 1103, 1109, 1115, 1120]],
  ['h', 589, 597, 1048, R, [1058, 1064, 1069, 1075, 1081, 1086, 1092, 1098, 1103, 1109, 1115, 1120]],
  ['v', 1048, 1058, 598, B, [603, 609, 615, 621, 626, 632, 637, 642, 646, 651]],
  ['v', 1059, 1067, 598, B, [603, 609, 614, 619, 624, 629, 634, 639, 644, 650]],
  ['h', 598, 605, 1068, R, [1073, 1079, 1085, 1090, 1096, 1101, 1107, 1114, 1120]],
  ['v', 1068, 1076, 606, B, [611, 617, 622, 628, 634, 639, 644, 650]],
  ['h', 606, 615, 1077, R, [1082, 1087, 1092, 1098, 1104, 1109, 1115, 1120]],
  ['v', 1077, 1085, 616, B, [621, 627, 633, 639, 645, 650]],
  ['h', 616, 624, 1086, R, [1091, 1097, 1103, 1108, 1114, 1120]],
  ['v', 1086, 1095, 625, B, [629, 634, 639, 645, 650]],
  ['h', 625, 634, 1096, R, [1100, 1105, 1110, 1116, 1121]],
  ['v', 1096, 1104, 635, B, [639, 644, 650]],
  ['h', 635, 643, 1105, R, [1109, 1115, 1120]],
  ['v', 1105, 1112, 644, B, [650]],
  ['v', 1113, 1117, 644, B, [647, 650, 653]],
  ['h', 644, 647, 1118, R, [1120, 1123]],
  ['h', 648, 650, 1118, R, [1119, 1121, 1124]],
  ['h', 651, 653, 1118, R, [1120, 1123]],
  ['h', 654, B, 1118, R, [1120, 1122, 1124]]
];
const tree = document.getElementById('tree');
function add(tag, attrs, text) {
  const el = document.createElementNS(NS, tag);
  for (const k in attrs) el.setAttribute(k, attrs[k]);
  if (text) el.textContent = text;
  tree.append(el);
}
for (const [dir, a, b, start, end, cuts, colors = ['#bae4d9']] of strips) {
  let p = start;
  [...cuts, end].forEach((q, i) => {
    const fill = colors[Math.min(i, colors.length - 1)];
    add('rect', dir === 'v'
      ? { x: a, y: p, width: b - a, height: q - p, fill }
      : { x: p, y: a, width: q - p, height: b - a, fill });
    p = q + 1;
  });
}
const labels = [
  [391, 205, 'Thane West'], [391, 347, 'Mira Road East'], [391, 462, 'Kharghar'], [391, 562, 'Ulwe'],
  [596, 205, 'Nala Sopara'], [596, 290, 'Borivali West'], [596, 368, 'Kalyan West'], [596, 445, 'Andheri West'], [596, 518, 'Powai'], [596, 589, 'Panvel'],
  [728, 205, 'Chembur'], [808, 205, 'Malad', 'West'], [888, 205, 'Kandivali', 'East'], [960, 205, 'Virar'],
  [728, 310, 'Kamothe'], [728, 365, 'Goregaon', 'West'], [728, 417, 'Malad East'], [728, 466, 'Boisar'], [728, 563, 'Dahisar'],
  [811, 310, 'Taloja'], [811, 377, 'Juhu'], [811, 455, 'Parel']
];
for (const [x, y, ...lines] of labels)
  lines.forEach((t, i) => add('text', { x: x + 7, y: y + 20 + i * 17, class: x === 391 ? 'lt' : 'dk' }, t));
```
